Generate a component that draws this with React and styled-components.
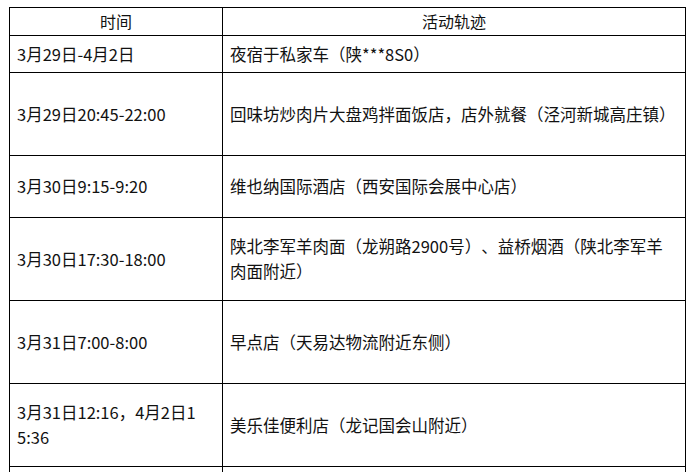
import React from 'react';
import styled, { createGlobalStyle } from 'styled-components';

// \n marks where the original cell wraps
const rows = [
	{ time: '3月29日-4月2日', place: '夜宿于私家车（陕***8S0）', h: 37 },
	{ time: '3月29日20:45-22:00', place: '回味坊炒肉片大盘鸡拌面饭店，店外就餐（泾河新城高庄镇）', h: 83 },
	{ time: '3月30日9:15-9:20', place: '维也纳国际酒店（西安国际会展中心店）', h: 62 },
	{ time: '3月30日17:30-18:00', place: '陕北李军羊肉面（龙朔路2900号）、益桥烟酒（陕北李军羊\n肉面附近）', h: 83 },
	{ time: '3月31日7:00-8:00', place: '早点店（天易达物流附近东侧）', h: 83 },
	{ time: '3月31日12:16，4月2日1\n5:36', place: '美乐佳便利店（龙记国会山附近）', h: 83 },
	{ time: '', place: '', h: 62 },
];

const App = () => {
	return (
		<>
			<GlobalStyle />
			<Page lang="zh-CN">
				<Table>
					<colgroup>
						<col style={{ width: 213 }} />
						<col />
					</colgroup>
					<thead>
						<Row $h={28}>
							<Head>时间</Head>
							<Head>活动轨迹</Head>
						</Row>
					</thead>
					<tbody>
						{rows.map((r, i) => (
							<Row key={i} $h={r.h}>
								<Cell>{r.time}</Cell>
								<Cell>{r.place}</Cell>
							</Row>
						))}
					</tbody>
				</Table>
			</Page>
		</>
	);
};

export default App;

const GlobalStyle = createGlobalStyle`
	html, body {
		margin: 0;
		padding: 0;
		background: #fff;
	}
`;

const Page = styled.div`
	padding: 7px 0 0 9px;
	height: 472px;
	overflow: hidden;
	box-sizing: border-box;
	font-family: 'Noto Sans CJK SC', 'Noto Sans', sans-serif;
	color: #111;
	text-spacing-trim: space-all;
`;

const Table = styled.table`
	width: 677px;
	border-collapse: collapse;
	table-layout: fixed;
`;

const Row = styled.tr`
	height: ${(p) => p.$h}px;
`;

const Head = styled.th`
	border: 1px solid #000;
	font-weight: normal;
	font-size: 16px;
	line-height: 25px;
	padding: 0 8px;
	text-align: center;
	vertical-align: middle;
`;

const Cell = styled.td`
	border: 1px solid #000;
	font-size: 16.5px;
	line-height: 25px;
	padding: 0 4px 0 7px;
	text-align: left;
	vertical-align: middle;
	white-space: pre;
`;
